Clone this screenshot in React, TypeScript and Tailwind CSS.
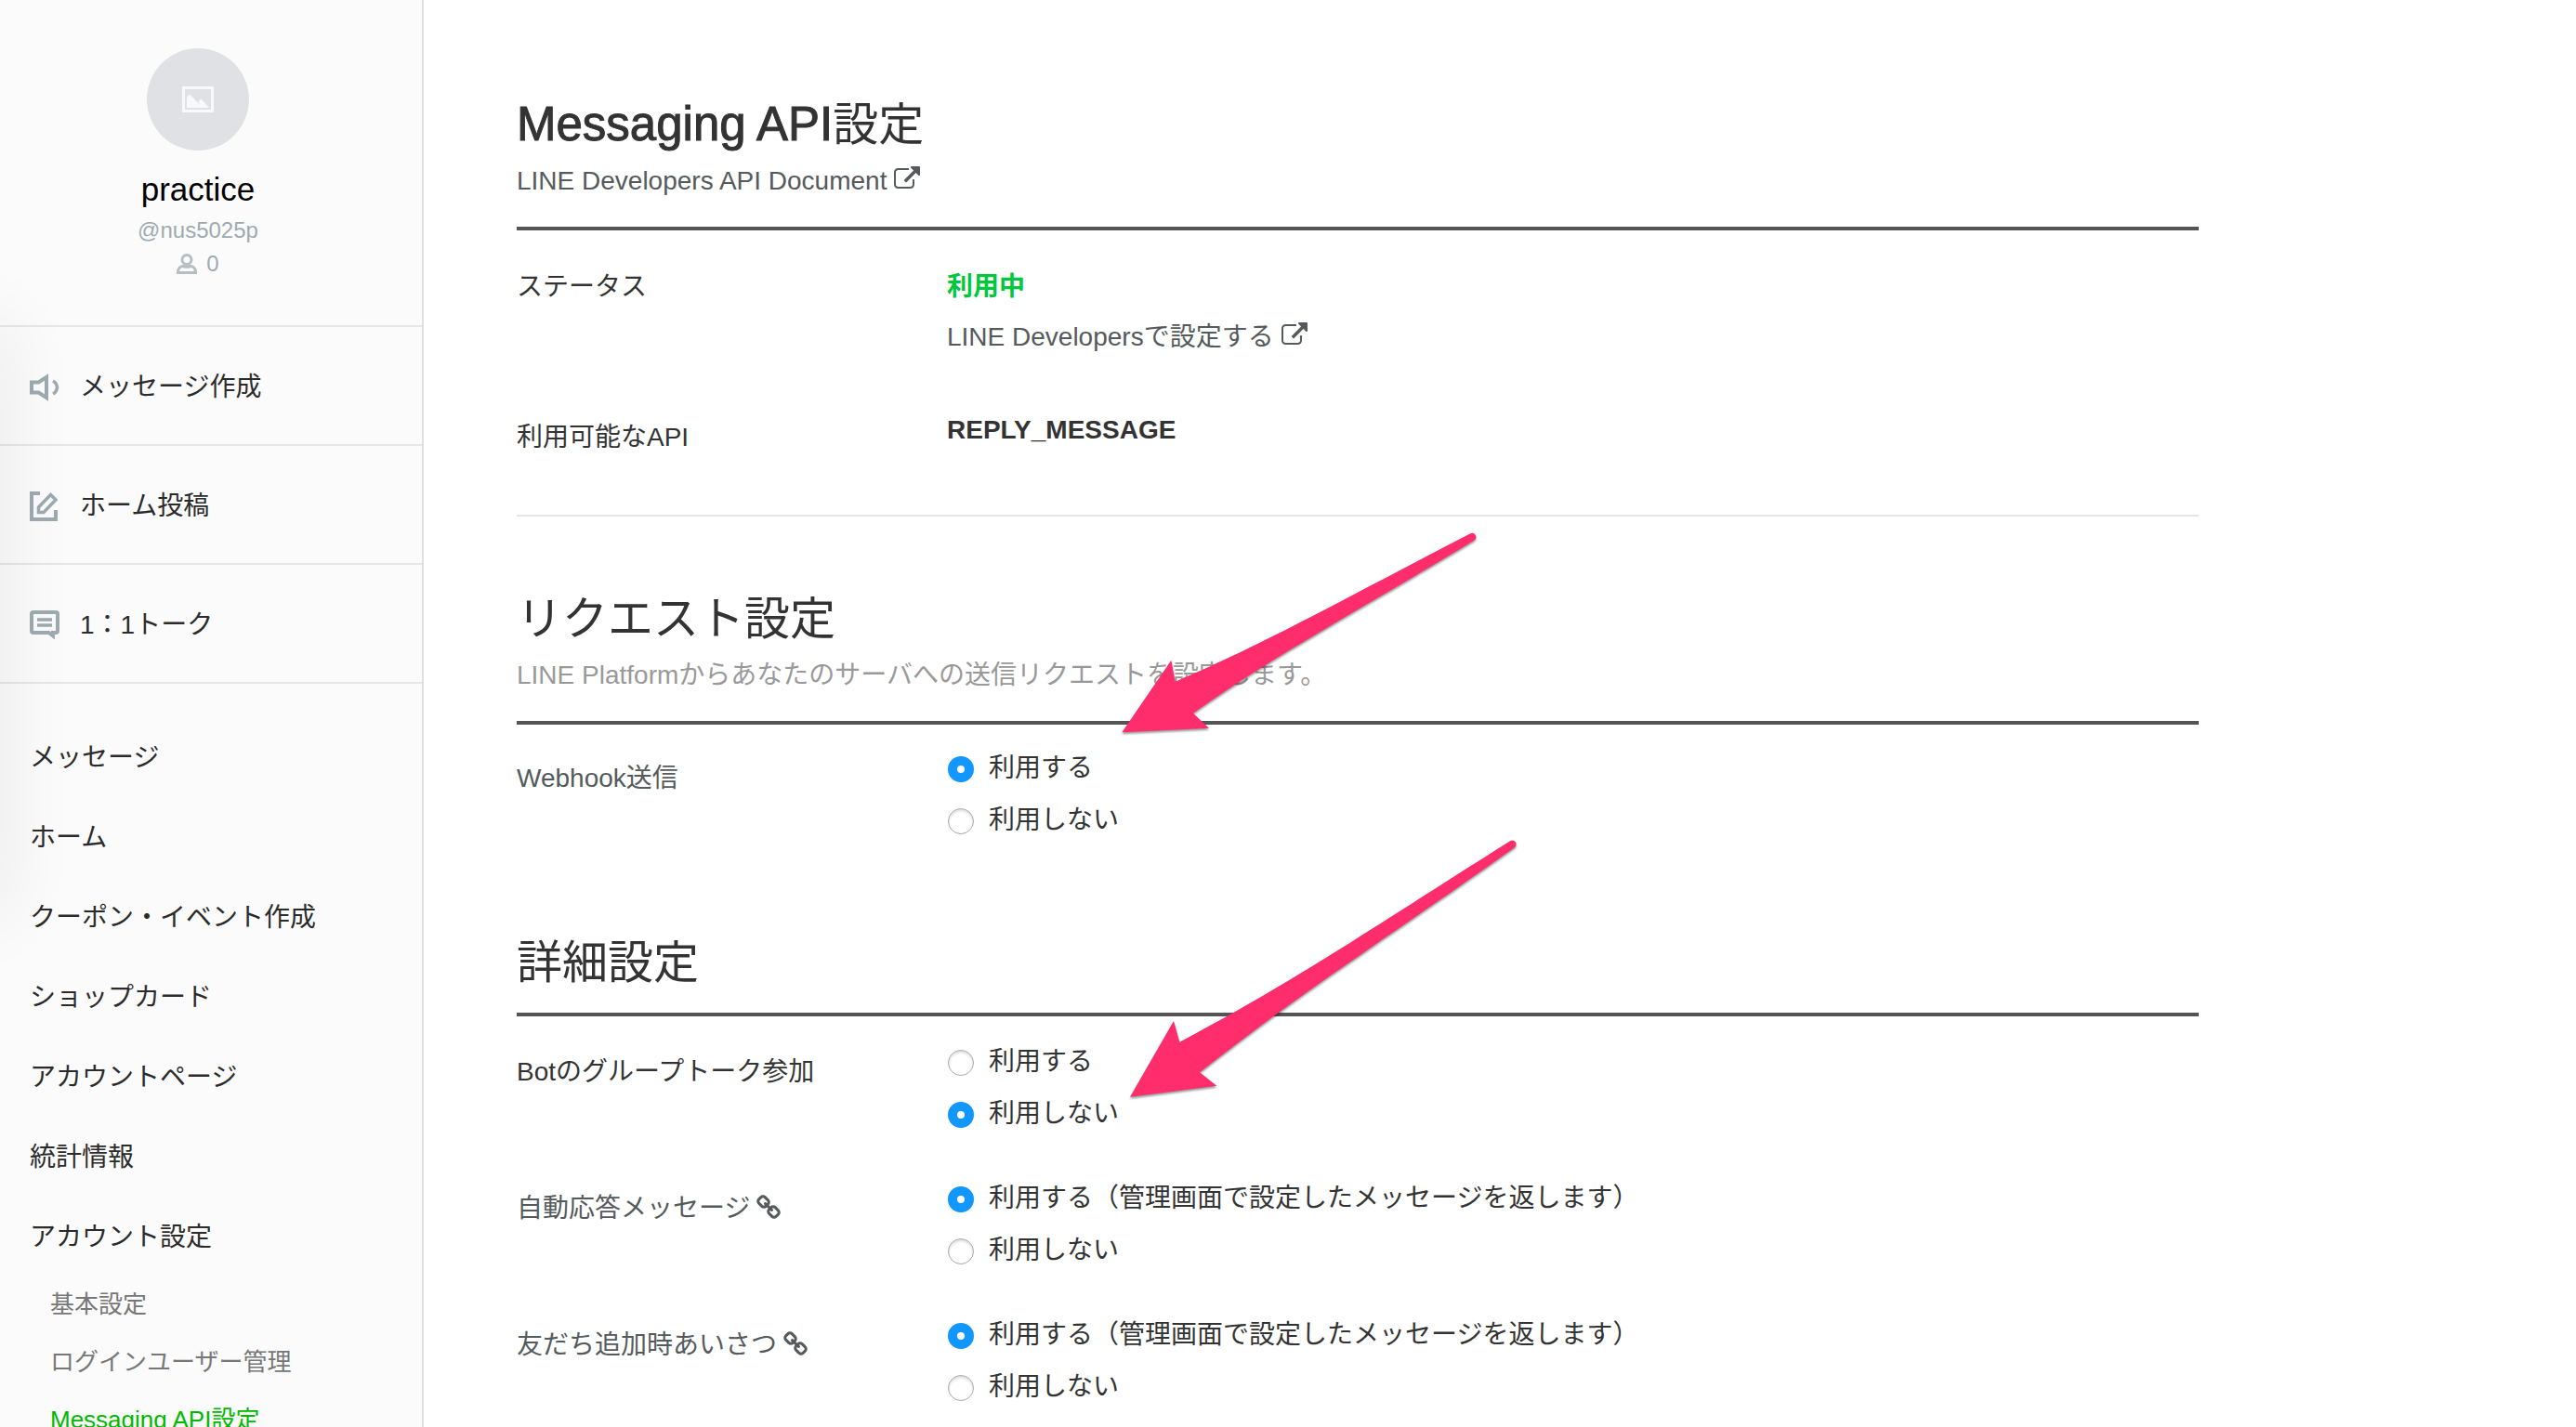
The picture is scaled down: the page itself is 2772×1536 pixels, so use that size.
import type { ReactNode } from "react";

const sans = "font-['Liberation_Sans','Noto_Sans_CJK_JP',sans-serif]";

function ExternalLinkIcon() {
  return (
    <svg viewBox="0 0 1792 1792" className="ml-2 inline-block size-7 align-[-3px]" fill="currentColor" aria-hidden="true">
      <path d="M1408 928v320q0 119-84.5 203.5t-203.5 84.5h-832q-119 0-203.5-84.5t-84.5-203.5v-832q0-119 84.5-203.5t203.5-84.5h704q14 0 23 9t9 23v64q0 14-9 23t-23 9h-704q-66 0-113 47t-47 113v832q0 66 47 113t113 47h832q66 0 113-47t47-113v-320q0-14 9-23t23-9h64q14 0 23 9t9 23zm384-864v512q0 26-19 45t-45 19-45-19l-176-176-652 652q-10 10-23 10t-23-10l-114-114q-10-10-10-23t10-23l652-652-176-176q-19-19-19-45t19-45 45-19h512q26 0 45 19t19 45z" />
    </svg>
  );
}

function ChainIcon() {
  return (
    <svg viewBox="0 0 1792 1792" className="ml-1.5 inline-block size-7 align-[-4px]" fill="currentColor" aria-hidden="true">
      <path d="M1520 1216q0-40-28-68l-208-208q-28-28-68-28-42 0-72 32 3 3 19 18.500t21.500 21.500 15 19 13 25.500 3.500 27.500q0 40-28 68t-68 28q-15 0-27.500-3.500t-25.500-13-19-15-21.500-21.500-18.500-19q-33 31-33 73 0 40 28 68l206 207q27 27 68 27 40 0 68-26l147-146q28-28 28-67zm-703-705q0-40-28-68l-206-207q-28-28-68-28-39 0-68 27l-147 146q-28 28-28 67 0 40 28 68l208 208q27 27 68 27 42 0 72-31-3-3-19-18.500t-21.500-21.500-15-19-13-25.500-3.500-27.500q0-40 28-68t68-28q15 0 27.500 3.500t25.500 13 19 15 21.500 21.500 18.500 19q33-31 33-73zm895 705q0 120-85 203l-147 146q-83 83-203 83-121 0-204-85l-206-207q-83-83-83-203 0-123 88-209l-88-88q-86 88-208 88-120 0-204-84l-208-208q-84-84-84-204t85-203l147-146q83-83 203-83 121 0 204 85l206 207q83 83 83 203 0 123-88 209l88 88q86-88 208-88 120 0 204 84l208 208q84 84 84 204z" />
    </svg>
  );
}

function SpeakerIcon() {
  return (
    <svg viewBox="0 0 32 32" className="size-8" fill="none" stroke="#9dabb1" strokeWidth="4" aria-hidden="true">
      <path d="M2 10.500H9.500L18 5V27L9.500 21.500H2Z" />
      <path d="M25 9Q29 11 29.500 16Q29 21 25 23" strokeWidth="3.500" />
    </svg>
  );
}

function ComposeIcon() {
  return (
    <svg viewBox="0 0 32 32" className="size-8" fill="none" stroke="#9dabb1" strokeWidth="4" aria-hidden="true">
      <path d="M11 2H2V30H28V20" />
      <path d="M9.500 22.500V17L22.500 3.500L28 9L15 22.500Z" strokeWidth="3.500" />
    </svg>
  );
}

function TalkIcon() {
  return (
    <svg viewBox="0 0 32 32" className="size-8" fill="none" stroke="#9dabb1" strokeWidth="4" aria-hidden="true">
      <path d="M4 2H28Q30 2 30 4V22Q30 24 28 24H25V27.500L20.500 24H4Q2 24 2 22V4Q2 2 4 2Z" />
      <path d="M8 10H24M8 16H24" strokeWidth="3.500" />
    </svg>
  );
}

function UserIcon() {
  return (
    <svg viewBox="0 0 22 22" className="size-[22px]" fill="none" stroke="#b3bfc3" strokeWidth="3" aria-hidden="true">
      <circle cx="11" cy="6.500" r="5" />
      <path d="M1.500 20.500C1.500 15 5 13.500 7 13.500Q11 15 15 13.500C17 13.500 20.500 15 20.500 20.500Z" />
    </svg>
  );
}

function PictureIcon() {
  return (
    <svg viewBox="0 0 34 28" className="h-7 w-[34px]" fill="#f9f9fb" aria-hidden="true">
      <path fillRule="evenodd" d="M0 0H34V28H0ZM3 3V25H31V3Z" />
      <path d="M5 23V11L8 8.500L19 19.500L17.500 16L20.500 13.500L29 23Z" />
    </svg>
  );
}

const actions = [
  { label: "メッセージ作成", icon: <SpeakerIcon /> },
  { label: "ホーム投稿", icon: <ComposeIcon /> },
  { label: "1：1トーク", icon: <TalkIcon /> },
];

const menu = [
  "メッセージ",
  "ホーム",
  "クーポン・イベント作成",
  "ショップカード",
  "アカウントページ",
  "統計情報",
  "アカウント設定",
];

function Sidebar() {
  return (
    <aside className="relative w-[456px] shrink-0 overflow-hidden border-r-2 border-[#e0e0e0] bg-[#fbfbfb]">
      <div className="flex h-[352px] flex-col items-center border-b-2 border-[#e6e6e6] pt-[52px] pr-[28px]">
        <div className="flex size-[110px] items-center justify-center rounded-full bg-[#e0e1e5]">
          <PictureIcon />
        </div>
        <p className="mt-5 text-[35px] leading-[44px] text-black">practice</p>
        <p className="mt-1 text-[24px] leading-9 text-[#9dabb1]">@nus5025p</p>
        <p className="flex items-center gap-2.5 text-[24px] leading-9 text-[#9dabb1]">
          <UserIcon />0
        </p>
      </div>
      <nav>
        <ul>
          {actions.map((a) => (
            <li key={a.label} className="border-b-2 border-[#e6e6e6]">
              <a href="#" className="flex h-[126px] items-center gap-[22px] pt-1 pl-8 text-[28px] text-[#2b2b2b]">
                {a.icon}
                {a.label}
              </a>
            </li>
          ))}
        </ul>
        <ul className="pt-[37px]">
          {menu.map((m) => (
            <li key={m}>
              <a href="#" className="block pl-8 text-[28px] leading-[86px] text-[#2b2b2b]">
                {m}
              </a>
            </li>
          ))}
        </ul>
        <ul className="-mt-0.5 pl-[54px] text-[26px] leading-[62px] text-[#777]">
          <li><a href="#">基本設定</a></li>
          <li><a href="#">ログインユーザー管理</a></li>
          <li><a href="#" className="text-[#00b900]">Messaging API設定</a></li>
        </ul>
      </nav>
      <div className="pointer-events-none absolute top-[340px] -left-10 h-[650px] w-10 rounded-full shadow-[0_0_80px_rgba(0,0,0,0.1)]" />
    </aside>
  );
}

function SectionHead({ title, children, className }: { title: ReactNode; children?: ReactNode; className: string }) {
  return (
    <header className={`border-b-4 border-[#555] ${className}`}>
      <h2 className="text-[49px] leading-[60px] text-[#333]">{title}</h2>
      {children}
    </header>
  );
}

function RadioRow({
  name,
  label,
  on,
  labelClass,
  detail = "",
}: {
  name: string;
  label: ReactNode;
  on: boolean;
  labelClass: string;
  detail?: string;
}) {
  const options = [
    { text: "利用する" + detail, checked: on },
    { text: "利用しない", checked: !on },
  ];
  return (
    <div className="grid grid-cols-[464px_1fr]" role="radiogroup" aria-labelledby={name + "-label"}>
      <div id={name + "-label"} className={`leading-[76px] ${labelClass}`}>
        {label}
      </div>
      <div>
        {options.map((o, i) => (
          <label key={i} className="flex h-14 items-center gap-4 text-[#333]">
            <input
              type="radio"
              name={name}
              defaultChecked={o.checked}
              className="size-7 appearance-none rounded-full border border-[#aaa] bg-white shadow-[inset_0_2px_3px_rgba(0,0,0,0.15)] checked:border-[10px] checked:border-[#1296ff] checked:shadow-none"
            />
            <span className="pb-0.5 leading-[50px]">{o.text}</span>
          </label>
        ))}
      </div>
    </div>
  );
}

function Arrow({ d, box, className }: { d: string; box: string; className: string }) {
  return (
    <svg viewBox={box} className={`pointer-events-none absolute drop-shadow-[0_2px_1px_rgba(0,0,0,0.4)] ${className}`} fill="#ff2d6c" aria-hidden="true">
      <path d={d} />
    </svg>
  );
}

export default function App() {
  return (
    <div className={`flex h-screen overflow-hidden bg-white ${sans}`}>
      <Sidebar />
      <main className="min-w-0 flex-1 pl-[100px] text-[28px]">
        <div className="relative max-w-[1810px]">
          <section>
            <SectionHead
              className="pt-[104px] pb-[22px]"
              title={
                <>
                  <span className="text-[51px] leading-none [-webkit-text-stroke:1px_#333]">Messaging API</span>設定
                </>
              }
            >
              <a href="#" className="mt-1 block leading-[54px] text-[#555a5c]">
                LINE Developers API Document
                <ExternalLinkIcon />
              </a>
            </SectionHead>
            <dl className="grid grid-cols-[463px_1fr] gap-y-[46px] border-b-2 border-[#e6e6e6] pt-[34px] pb-12 text-[#333]">
              <dt className="leading-[54px]">ステータス</dt>
              <dd className="leading-[54px]">
                <strong className="block text-[#00c73c]">利用中</strong>
                <a href="#" className="block text-[#555a5c]">
                  LINE Developersで設定する
                  <ExternalLinkIcon />
                </a>
              </dd>
              <dt className="leading-[70px]">利用可能なAPI</dt>
              <dd className="font-bold leading-[54px]">REPLY_MESSAGE</dd>
            </dl>
          </section>

          <section>
            <SectionHead className="pt-20 pb-[22px]" title="リクエスト設定">
              <p className="mt-1 leading-[54px] text-[#999]">
                LINE Platformからあなたのサーバへの送信リクエストを設定します。
              </p>
            </SectionHead>
            <div className="pt-5">
              <RadioRow name="webhook" label="Webhook送信" on labelClass="text-[#555a5c]" />
            </div>
          </section>

          <section>
            <SectionHead className="pt-[94px] pb-6" title="詳細設定" />
            <div className="flex flex-col gap-[35px] pt-[22px]">
              <RadioRow name="group" label="Botのグループトーク参加" on={false} labelClass="text-[#333]" />
              <RadioRow
                name="auto-reply"
                label={<a href="#">自動応答メッセージ<ChainIcon /></a>}
                on
                labelClass="text-[#555a5c]"
                detail="（管理画面で設定したメッセージを返します）"
              />
              <RadioRow
                name="greeting"
                label={<a href="#">友だち追加時あいさつ<ChainIcon /></a>}
                on
                labelClass="text-[#555a5c]"
                detail="（管理画面で設定したメッセージを返します）"
              />
            </div>
          </section>

          <Arrow
            className="top-[560px] left-[634px] h-[250px] w-[420px]"
            box="0 0 1260 750"
            d="M52 685L211 452L224 521C500 405 720 280 1177 43A12 12 0 0 1 1188 65C820 290 560 425 282 623L333 671Z"
          />
          <Arrow
            className="top-[890px] left-[644px] h-[310px] w-[450px]"
            box="0 0 1350 930"
            d="M48 872L189 627L208 695C560 508 760 372 1275 46A12 12 0 0 1 1289 67C900 345 640 505 273 793L328 836Z"
          />
        </div>
      </main>
    </div>
  );
}
